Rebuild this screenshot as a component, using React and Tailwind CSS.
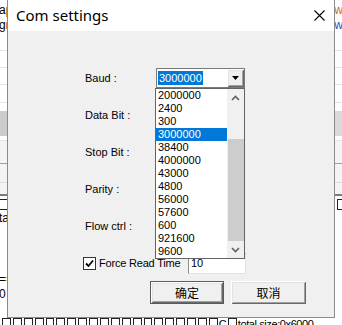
import React from "react";

const items = ["2000000", "2400", "300", "3000000", "38400", "4000000", "43000", "4800", "56000", "57600", "600", "921600", "9600"];

const ui = { fontFamily: '"Liberation Sans", Arial, sans-serif' };
const cjk = { fontFamily: '"Noto Sans CJK SC", "Liberation Sans", sans-serif' };

function Background() {
  return (
    <div className="w-full h-full flex flex-col text-[12px] leading-[15px] text-black" style={ui}>
      <div className="h-[34px] pt-[3px] flex flex-col">
        <div className="h-[15px] flex justify-between">
          <span className="-ml-[1px]">ap</span>
          <span className="text-[#d2691e] -mr-[1px]">w</span>
        </div>
        <div className="h-[16px] flex justify-between">
          <span className="-ml-[1px]">gr</span>
          <span className="text-[#3050c0] -mr-[1px]">w</span>
        </div>
      </div>
      <div className="h-[17px] border-b border-[#e3e3e3]" />
      <div className="h-[17px] border-b border-[#e3e3e3]" />
      <div className="h-[17px] border-b border-[#e3e3e3]" />
      <div className="h-[18px] border-b border-[#e3e3e3]" />
      <div className="h-[8px]" />
      <div className="h-[25px] flex">
        <div className="w-[8px] bg-[#cccccc]" />
        <div className="flex-1 bg-[#dadada]" />
      </div>
      <div className="h-[5px] border-b border-[#e3e3e3]" />
      <div className="h-[23px] bg-[#f4f4f4] border-b border-[#a0a0a0]" />
      <div className="h-[19px] bg-[#f4f4f4] border-b border-[#dddddd]" />
      <div className="h-[13px] bg-[#f4f4f4] border-b-2 border-[#7a7a7a]" />
      <div className="flex-1 flex flex-col">
        <div className="h-[13px] mt-[2px] flex justify-between items-center">
          <span className="w-[9px] h-[11px] border border-[#222] -ml-[1px]" />
          <span className="flex gap-[2px] -mr-[4px]">
            <span className="w-[9px] h-[11px] border border-[#222]" />
            <span className="w-[9px] h-[11px] border border-[#222]" />
          </span>
        </div>
        <div className="h-[15px] -ml-[1px]">ta</div>
        <div className="h-[46px]" />
        <div className="h-[15px] -ml-[1px]">==</div>
        <div className="h-[15px] -ml-[1px]">0 <span className="text-[#8b0000]">(</span></div>
      </div>
      <div className="h-[8px] overflow-hidden flex items-start pl-[2px] pt-[1px] text-[11px]">
        <div className="flex items-start gap-[2px]">
          {Array.from({ length: 20 }).map((_, i) => (
            <span key={i} className="w-[8.9px] h-[12px] border border-[#222] shrink-0" />
          ))}
        </div>
        <span className="leading-[12px] ml-[1px]">C</span>
        <span className="w-[9px] h-[12px] border border-[#222] shrink-0 ml-[1px]" />
        <span className="leading-[12px] ml-[1px] tracking-[-0.4px]">total size:0x6000</span>
      </div>
    </div>
  );
}

function Chevron({ up }) {
  return (
    <svg width="9" height="6" viewBox="0 0 9 6" className="block">
      <path d={up ? "M1 5 L4.5 1.5 L8 5" : "M1 1 L4.5 4.5 L8 1"} fill="none" stroke="#606060" strokeWidth="1.6" />
    </svg>
  );
}

const bevel =
  "shadow-[inset_1px_1px_0_#ffffff,inset_-1px_-1px_0_#696969,inset_2px_2px_0_#e3e3e3,inset_-2px_-2px_0_#a0a0a0]";

export default function App() {
  return (
    <div className="relative w-[342px] h-[325px] overflow-hidden bg-white">
      <Background />
      <div
        className="absolute left-[7px] top-[-1px] w-[328px] h-[319px] border border-[#8a8a8a] bg-[#f0f0f0] flex flex-col"
        style={ui}
      >
        <div className="h-[31px] shrink-0 bg-white flex items-center justify-between pl-[8px] pr-[9px]">
          <span className="text-[15px] text-black" style={{ fontFamily: '"Noto Sans", "Open Sans", sans-serif' }}>
            Com settings
          </span>
          <svg width="11" height="11" viewBox="0 0 11 11" className="block">
            <path d="M0.5 0.5 L10.5 10.5 M10.5 0.5 L0.5 10.5" stroke="#000" strokeWidth="1.1" />
          </svg>
        </div>
        <div className="flex-1 pt-[37px] pl-[77px] flex flex-col text-[11px] text-black">
          <div className="flex flex-col gap-[17px]">
            <div className="h-[20px] flex items-center">
              <span className="w-[71px]">Baud<span className="ml-[3px]">:</span></span>
              <div className="relative z-10">
                <div className="w-[89px] h-[20px] bg-white border border-[#7a7a7a] flex items-center justify-between">
                  <span className="ml-[1px] px-[1px] h-[14px] leading-[14px] bg-[#0078d7] text-white">3000000</span>
                  <div className={`w-[17px] h-[18px] bg-[#f0f0f0] flex items-center justify-center ${bevel}`}>
                    <svg width="7" height="4" viewBox="0 0 7 4" className="block">
                      <path d="M0 0 L7 0 L3.5 4 Z" fill="#000" />
                    </svg>
                  </div>
                </div>
                <div className="absolute left-[-1px] top-[20px] w-[90px] h-[171px] border border-[#646464] bg-white flex">
                  <div className="w-[71px] flex flex-col">
                    {items.map((it) => (
                      <div
                        key={it}
                        className={`h-[13px] leading-[13px] pl-[2px] ${it === "3000000" ? "bg-[#0078d7] text-white" : "text-black"}`}
                      >
                        {it}
                      </div>
                    ))}
                  </div>
                  <div className="w-[17px] bg-[#f0f0f0] flex flex-col">
                    <div className="h-[17px] flex items-center justify-center">
                      <Chevron up />
                    </div>
                    <div className="flex-1 flex flex-col justify-end">
                      <div className="h-[102px] ml-[1px] bg-[#cdcdcd]" />
                    </div>
                    <div className="h-[17px] flex items-center justify-center">
                      <Chevron />
                    </div>
                  </div>
                </div>
              </div>
            </div>
            <div className="h-[20px] flex items-center">
              <span>Data Bit<span className="ml-[3px]">:</span></span>
            </div>
            <div className="h-[20px] flex items-center">
              <span>Stop Bit<span className="ml-[3px]">:</span></span>
            </div>
            <div className="h-[20px] flex items-center">
              <span>Parity<span className="ml-[3px]">:</span></span>
            </div>
            <div className="h-[20px] flex items-center">
              <span>Flow ctrl<span className="ml-[3px]">:</span></span>
            </div>
            <div className="h-[21px] flex items-center -ml-[2px]">
              <div className="w-[105px] flex items-center">
                <span className="w-[13px] h-[13px] bg-white border border-[#333] flex items-center justify-center">
                  <svg width="9" height="9" viewBox="0 0 9 9" className="block">
                    <path d="M1 4.5 L3.5 7 L8 1.5" fill="none" stroke="#000" strokeWidth="1.8" />
                  </svg>
                </span>
                <span className="ml-[3px] tracking-[-0.2px]">Force Read Time</span>
              </div>
              <div className="w-[58px] h-[21px] bg-white border border-[#8a8a8a] border-r-[#e3e3e3] border-b-[#e3e3e3] flex items-center pl-[2px]">
                10
              </div>
            </div>
          </div>
          <div className="mt-[7px] ml-[65px] flex gap-[7px]" style={cjk}>
            <button className={`w-[74px] h-[23px] bg-[#f0f0f0] text-[12px] border border-[#5a5a5a] ${bevel}`}>确定</button>
            <button className={`w-[75px] h-[23px] bg-[#f0f0f0] text-[12px] ${bevel}`}>取消</button>
          </div>
        </div>
      </div>
    </div>
  );
}
